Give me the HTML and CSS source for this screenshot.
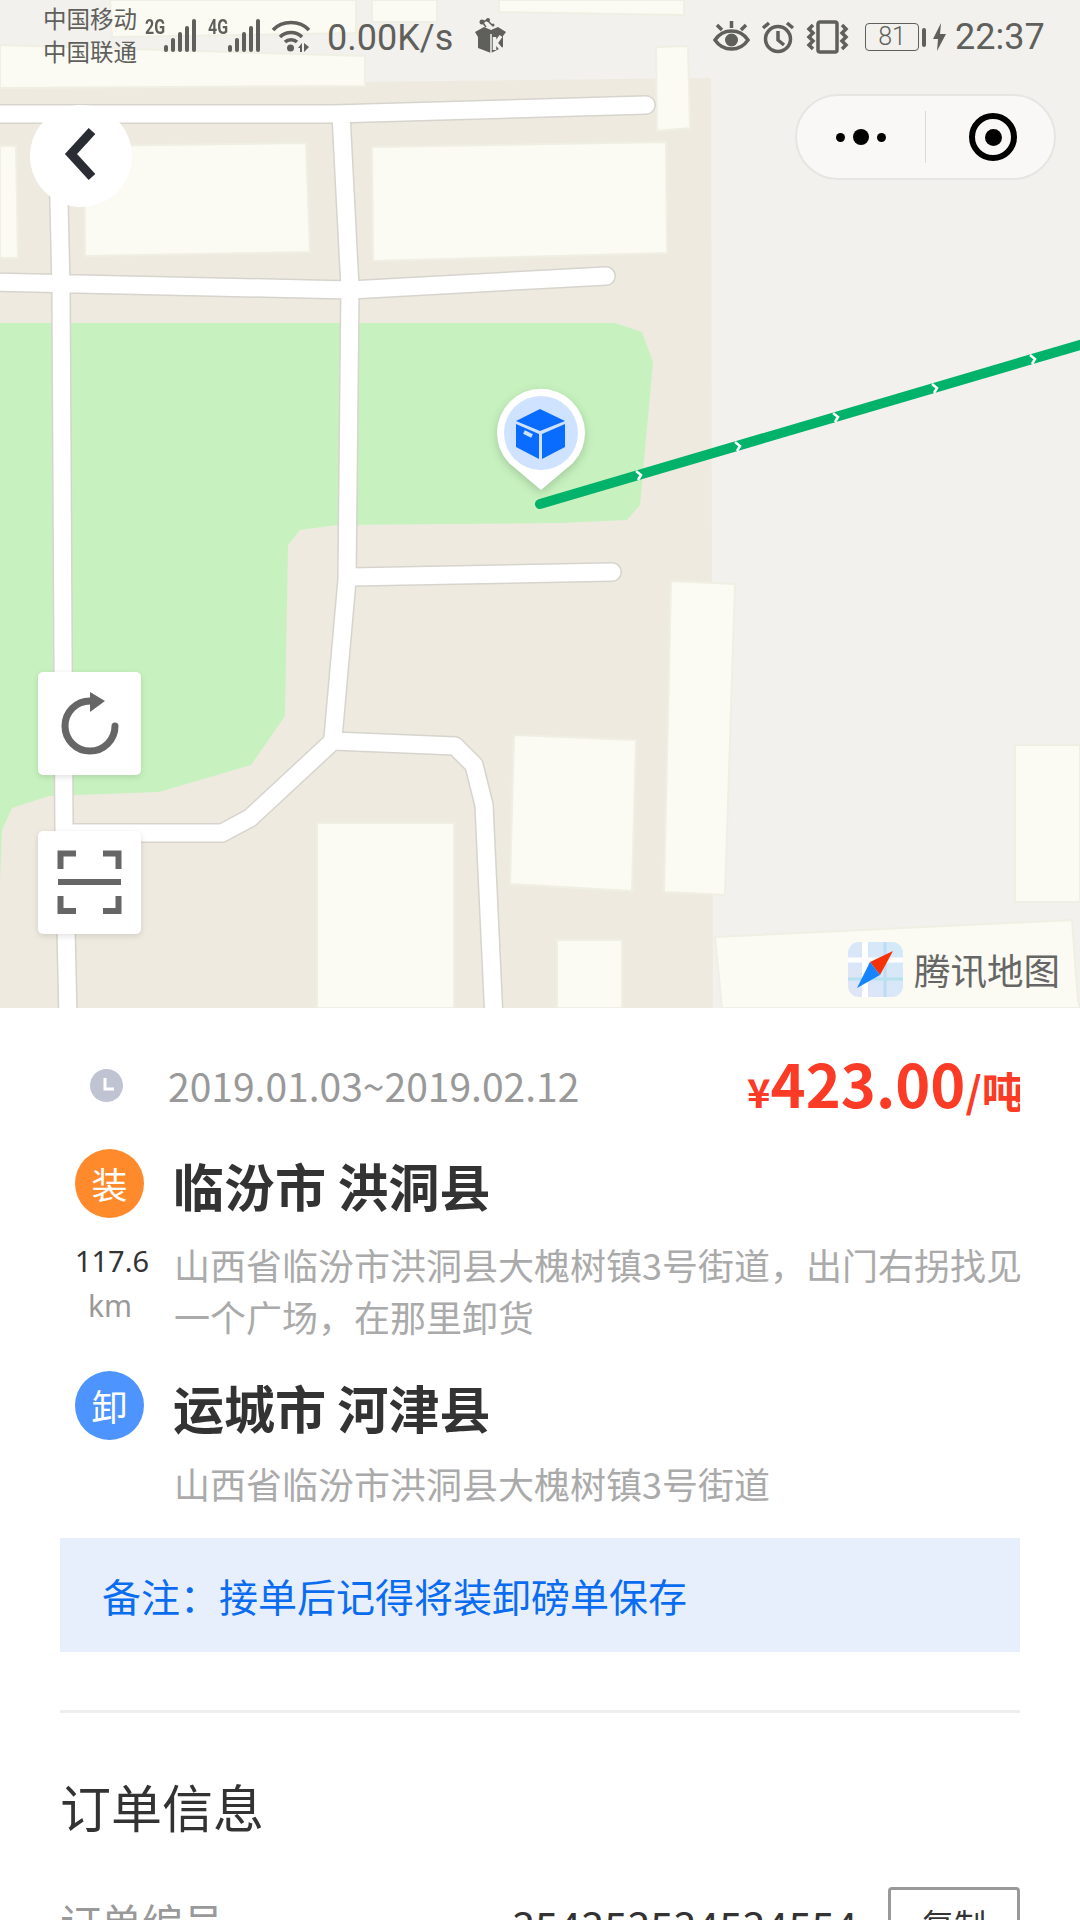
FILE: index.html
```html
<!DOCTYPE html>
<html lang="zh">
  <head>
    <meta charset="UTF-8" />
    <title>订单详情</title>
    <link rel="stylesheet" href="styles.css">
  </head>
  <body>
    <div class="map">
      <svg class="mapCanvas" viewBox="0 0 1080 1008" width="1080" height="1008">
        <defs>
          <path id="roads" d="M-10 114 L333 114 L646 105 M341 114 L350 288 L347 580 L333 738 M57 114 L61 288 L64 833 L68 1020 M-10 282 L350 290 L606 276 M350 577 L612 572 M64 833 L222 833 L250 818 L333 741 L455 746 L474 765 L484 805 L494 1020" />
        </defs>
        <rect class="ground" width="1080" height="1008" />
        <path class="block" d="M0 86 L711 78 L713 1008 L0 1008 Z" />
        <path class="park" d="M0 323 L615 323 L642 332 L653 362 L640 505 L627 520 L560 523 L337 525 L300 530 L288 545 L285 716 L251 765 L159 792 L49 796 L12 808 L2 830 L0 880 Z" />
        <g class="buildings">
          <path d="M0 45 L365 56 L365 86 L0 88 Z" />
          <path d="M110 0 L356 0 L356 33 L112 37 Z" />
          <path d="M372 0 L437 0 L437 22 L372 22 Z" />
          <path d="M499 0 L684 0 L684 15 L499 12 Z" />
          <path d="M656 47 L688 46 L690 128 L657 131 Z" />
          <path d="M0 146 L16 146 L18 258 L0 258 Z" />
          <path d="M84 146 L306 143 L310 252 L85 256 Z" />
          <path d="M372 147 L666 142 L667 253 L373 261 Z" />
          <path d="M671 581 L735 584 L725 895 L664 892 Z" />
          <path d="M514 735 L636 740 L632 891 L510 884 Z" />
          <path d="M317 823 L454 823 L454 1008 L317 1008 Z" />
          <path d="M557 940 L622 940 L622 1008 L557 1008 Z" />
          <path d="M1015 745 L1080 745 L1080 902 L1015 902 Z" />
          <path d="M715 937 L1072 920 L1078 1000 L1080 1008 L722 1008 Z" />
        </g>
        <use class="roadCasing" href="#roads" />
        <use class="roadFill" href="#roads" />
        <path class="route" d="M540 504 L1090 342" />
        <g class="routeArrows">
          <path d="M636 471 L641 475 L638 480" />
          <path d="M735 442 L740 446 L737 451" />
          <path d="M833 413 L838 417 L835 422" />
          <path d="M932 384 L937 388 L934 393" />
          <path d="M1030 355 L1035 359 L1032 364" />
        </g>
        <path class="pin" d="M541 490 L509 463 A44 44 0 1 1 573 463 Z" />
        <circle class="pinInner" cx="541" cy="433" r="37" />
        <g class="pinBox">
          <path d="M540 409 L565 421 L540 431 L516 421 Z" />
          <path d="M516 424 L539 434 L539 459 L516 447 Z" />
          <path d="M542 434 L565 424 L565 447 L542 459 Z" />
        </g>
        <path class="pinSlot" d="M524 432 L532 436" />
      </svg>

      <div class="statusBar">
        <div class="carriers">
          <div>中国移动</div>
          <div>中国联通</div>
        </div>
        <span class="netType netFirst">2G</span>
        <svg class="bars" width="36" height="36" viewBox="0 0 36 36">
          <rect x="1" y="27" width="4" height="7" rx="2" />
          <rect x="8" y="20" width="4" height="14" rx="2" />
          <rect x="15" y="14" width="4" height="20" rx="2" />
          <rect x="22" y="8" width="4" height="26" rx="2" />
          <rect x="29" y="1" width="4" height="33" rx="2" />
        </svg>
        <span class="netType netSecond">4G</span>
        <svg class="bars" width="36" height="36" viewBox="0 0 36 36">
          <rect x="1" y="27" width="4" height="7" rx="2" />
          <rect x="8" y="20" width="4" height="14" rx="2" />
          <rect x="15" y="14" width="4" height="20" rx="2" />
          <rect x="22" y="8" width="4" height="26" rx="2" />
          <rect x="29" y="1" width="4" height="33" rx="2" />
        </svg>
        <svg class="wifi" width="40" height="34" viewBox="0 0 40 34">
          <path d="M2 11 C11 1 29 1 38 11 M9 18 C15 12 25 12 31 18" />
          <path d="M14 23 C17 20 23 20 26 23" />
          <circle class="fill" cx="19.5" cy="29" r="3.5" />
          <path class="fill" d="M27 29 L31 24 L31 33 L29 33 L29 29 Z M33 24 L33 33 L38 28 Z" />
        </svg>
        <span class="speed">0.00K/s</span>
        <svg class="gift" width="34" height="38" viewBox="0 0 34 38">
          <path d="M1 15 L10 10 L17 13 L24 10 L32 15 L29 19 L29 30 L17 36 L4 31 L4 20 Z" />
          <path class="giftMark" d="M17 17 L17 36" />
          <path class="giftKey" d="M20.5 20 L20.5 33 M27 19 L22 26 L27 32" />
          <path class="giftLine" d="M9 6 L12 10 M13 3 L9 5 M14 4 L18 8" />
          <circle cx="8" cy="5" r="2.5" /><circle cx="14" cy="3" r="2" /><circle cx="19" cy="8" r="1.5" />
        </svg>
        <div class="statusRight">
          <svg width="37" height="32" viewBox="0 0 37 32">
            <path d="M2 20 C10 8 27 8 35 20 C27 32 10 32 2 20 Z" />
            <circle class="fill" cx="18.5" cy="20" r="6.5" />
            <path d="M18.5 8 L18.5 1 M9 10 L4 5 M28 10 L33 5" />
          </svg>
          <svg width="34" height="34" viewBox="0 0 34 34">
            <circle cx="17" cy="19" r="12.5" />
            <path d="M17 11 L17 20 L23 25 M2 8 L8 3 M32 8 L26 3" />
          </svg>
          <svg width="43" height="34" viewBox="0 0 43 34">
            <rect x="12" y="2" width="19" height="30" rx="2" />
            <path d="M7 5 L3 9 L7 13 L3 17 L7 21 L3 25 L7 29 M36 5 L40 9 L36 13 L40 17 L36 21 L40 25 L36 29" />
          </svg>
          <div class="battery">81</div>
          <div class="batteryNub"></div>
          <svg class="bolt" width="13" height="28" viewBox="0 0 13 28">
            <path d="M8 0 L0 16 L5 16 L4 28 L13 11 L7 11 Z" />
          </svg>
          <span class="clock">22:37</span>
        </div>
      </div>

      <div class="backBtn">
        <svg width="102" height="102" viewBox="0 0 102 102">
          <path d="M62 26 L41 49 L62 72" />
        </svg>
      </div>

      <div class="capsule">
        <div class="capsuleDots">
          <i class="dot"></i><i class="dot dotBig"></i><i class="dot"></i>
        </div>
        <div class="capsuleLine"></div>
        <div class="capsuleTarget"><i></i></div>
      </div>

      <div class="mapBtn refreshBtn">
        <svg width="103" height="102" viewBox="0 0 103 102">
          <path d="M77 54 A25 25 0 1 1 52 29" />
          <path class="fill" d="M52 20 L67 29 L52 40 Z" />
        </svg>
      </div>
      <div class="mapBtn scanBtn">
        <svg width="103" height="103" viewBox="0 0 103 103">
          <path d="M38 22.5 L22.5 22.5 L22.5 38 M65 22.5 L80.5 22.5 L80.5 38 M22.5 65 L22.5 80 L38 80 M80.5 65 L80.5 80 L65 80 M20 51 L83 51" />
        </svg>
      </div>

      <div class="mapLogo">
        <svg width="55" height="55" viewBox="0 0 55 55">
          <defs>
            <linearGradient id="logoBg" x1="0" y1="1" x2="1" y2="0">
              <stop offset="0" stop-color="#dfe4f7" />
              <stop offset="1" stop-color="#d2eaf8" />
            </linearGradient>
          </defs>
          <rect width="55" height="55" rx="11" fill="url(#logoBg)" />
          <path d="M17 0 L17 55" stroke="#fff" stroke-width="6" />
          <path d="M37 0 L37 55" stroke="#bcdcf3" stroke-width="3" />
          <path d="M0 18 L55 18" stroke="#fff" stroke-width="5" />
          <path d="M0 37 L55 37" stroke="#b5e2ee" stroke-width="3" />
          <path d="M45 9 L22 20 L32 33 Z" fill="#f5310a" />
          <path d="M22 20 L9 46 L32 33 Z" fill="#1684ff" />
        </svg>
        <span>腾讯地图</span>
      </div>
    </div>

    <div class="panel">
      <div class="dateRow">
        <div class="dateLeft">
          <svg class="dateIcon" width="33" height="33" viewBox="0 0 33 33">
            <circle cx="16.5" cy="16.5" r="16.5" />
            <path d="M15 9 L15 20 L24 20" />
          </svg>
          <span class="dateText">2019.01.03~2019.02.12</span>
        </div>
        <div class="price"><span class="priceSign">¥</span><span class="priceNum">423.00</span><span class="priceUnit">/吨</span></div>
      </div>

      <div class="stop">
        <div class="badge badgeLoad">装</div>
        <div class="city">临汾市 洪洞县</div>
        <div class="distance">
          <div class="distanceNum">117.6</div>
          <div class="distanceUnit">km</div>
        </div>
        <div class="address">山西省临汾市洪洞县大槐树镇3号街道，出门右拐找见一个广场，在那里卸货</div>
      </div>

      <div class="stop stopLast">
        <div class="badge badgeUnload">卸</div>
        <div class="city">运城市 河津县</div>
        <div></div>
        <div class="address">山西省临汾市洪洞县大槐树镇3号街道</div>
      </div>

      <div class="remark">备注：接单后记得将装卸磅单保存</div>
      <div class="divider"></div>

      <div class="sectionTitle">订单信息</div>
      <div class="infoRow">
        <span class="infoLabel">订单编号</span>
        <span class="infoValue">354353534534554</span>
        <span class="copyBtn">复制</span>
      </div>
    </div>
  </body>
</html>
```

FILE: styles.css
```css
html, body {
  margin: 0;
  padding: 0;
  width: 1080px;
  height: 1920px;
  overflow: hidden;
  background-color: #fff;
  font-family: "Noto Sans CJK SC", "Noto Sans", sans-serif;
}

/* map */
.map {
  position: relative;
  width: 1080px;
  height: 1008px;
  overflow: hidden;
}
.mapCanvas {
  display: block;
}
.ground {
  fill: #f2f1ed;
}
.block {
  fill: #eeeae0;
}
.park {
  fill: #c7f2bf;
}
.buildings path {
  fill: #fbfbf3;
  stroke: #f0efe3;
  stroke-width: 2;
}
.roadCasing, .roadFill {
  fill: none;
  stroke-linecap: round;
  stroke-linejoin: round;
}
.roadCasing {
  stroke: #d6d4cd;
  stroke-width: 20;
}
.roadFill {
  stroke: #fff;
  stroke-width: 17;
}
.route {
  fill: none;
  stroke: #00b26a;
  stroke-width: 10;
  stroke-linecap: round;
}
.routeArrows path {
  fill: none;
  stroke: #fff;
  stroke-width: 2.5;
}
.pin {
  fill: #fff;
  filter: drop-shadow(0 3px 5px rgba(0, 0, 0, 0.18));
}
.pinInner {
  fill: #cfe2ff;
}
.pinBox path {
  fill: #0a6cff;
}
.pinSlot {
  stroke: #cfe2ff;
  stroke-width: 4;
}

/* status bar */
.statusBar {
  position: absolute;
  top: 0;
  left: 0;
  right: 0;
  height: 72px;
  display: flex;
  align-items: flex-start;
  padding-left: 43px;
  box-sizing: border-box;
  color: #5f5f5c;
}
.carriers {
  font-size: 23.5px;
  line-height: 33px;
  padding-top: 2px;
  width: 102px;
}
.netType {
  font-family: "Roboto", sans-serif;
  font-weight: 700;
  font-size: 20px;
  line-height: 20px;
  padding-top: 17px;
  transform: scaleX(0.8);
  transform-origin: left;
}
.netFirst {
  width: 18px;
}
.netSecond {
  width: 19px;
  margin-left: 9px;
}
.bars {
  margin-top: 18px;
  fill: #5f5f5c;
}
.wifi {
  margin: 19px 0 0 8px;
}
.wifi path, .statusRight svg path, .statusRight svg circle, .statusRight svg rect {
  fill: none;
  stroke: #5f5f5c;
  stroke-width: 3.5;
}
.wifi .fill, .statusRight svg .fill {
  fill: #5f5f5c;
  stroke: none;
}
.speed {
  font-family: "Roboto", sans-serif;
  font-size: 36px;
  line-height: 40px;
  padding-top: 18px;
  margin-left: 16px;
}
.gift {
  margin: 17px 0 0 21px;
  fill: #5f5f5c;
}
.giftMark {
  fill: none;
  stroke: #f2f1ed;
  stroke-width: 1.5;
}
.giftKey {
  fill: none;
  stroke: #f2f1ed;
  stroke-width: 3.5;
}
.giftLine {
  fill: none;
  stroke: #5f5f5c;
  stroke-width: 1.5;
}
.statusRight {
  position: absolute;
  top: 0;
  left: 713px;
  display: flex;
  align-items: flex-start;
}
.statusRight svg {
  margin-top: 20px;
  margin-right: 11px;
}
.statusRight svg:nth-child(3) {
  margin-right: 16px;
}
.battery {
  width: 52px;
  height: 26px;
  margin-top: 23px;
  border: 1.5px solid #5f5f5c;
  border-radius: 4px;
  font-family: "Roboto", sans-serif;
  font-weight: 300;
  font-size: 25px;
  line-height: 26px;
  text-align: center;
}
.batteryNub {
  width: 4px;
  height: 19px;
  margin: 28px 7px 0 3px;
  background-color: #5f5f5c;
  border-radius: 2px;
}
.statusRight svg.bolt {
  margin-top: 23px;
  margin-right: 9px;
}
.statusRight svg.bolt path {
  fill: #5f5f5c;
  stroke: none;
}
.clock {
  font-family: "Roboto", sans-serif;
  font-size: 36px;
  line-height: 40px;
  padding-top: 17px;
}

/* controls over the map */
.backBtn {
  position: absolute;
  left: 30px;
  top: 105px;
  width: 102px;
  height: 102px;
  border-radius: 50%;
  background-color: #fff;
}
.backBtn svg {
  display: block;
}
.backBtn path {
  fill: none;
  stroke: #2a2d34;
  stroke-width: 9;
}
.capsule {
  position: absolute;
  left: 795px;
  top: 94px;
  width: 261px;
  height: 86px;
  box-sizing: border-box;
  border: 2px solid #e6e5e2;
  border-radius: 43px;
  background-color: #f9f8f6;
  display: flex;
  align-items: center;
}
.capsuleDots {
  width: 128px;
  display: flex;
  align-items: center;
  justify-content: center;
  gap: 8px;
}
.dot {
  width: 9px;
  height: 9px;
  border-radius: 50%;
  background-color: #000;
}
.dotBig {
  width: 16px;
  height: 16px;
}
.capsuleLine {
  width: 1px;
  height: 52px;
  background-color: #dcdbd8;
}
.capsuleTarget {
  width: 48px;
  height: 48px;
  margin-left: 43px;
  box-sizing: border-box;
  border: 6px solid #000;
  border-radius: 50%;
  display: flex;
  align-items: center;
  justify-content: center;
}
.capsuleTarget i {
  width: 17px;
  height: 17px;
  border-radius: 50%;
  background-color: #000;
}
.mapBtn {
  position: absolute;
  left: 38px;
  width: 103px;
  height: 103px;
  background-color: #fff;
  border-radius: 5px;
  box-shadow: 0 2px 6px rgba(0, 0, 0, 0.12);
}
.refreshBtn {
  top: 672px;
}
.scanBtn {
  top: 831px;
}
.mapBtn svg {
  display: block;
}
.mapBtn path {
  fill: none;
  stroke: #666;
  stroke-width: 6;
  stroke-linecap: butt;
}
.refreshBtn path {
  stroke-width: 7;
  stroke-linecap: round;
}
.mapBtn .fill {
  fill: #666;
  stroke: none;
}
.mapLogo {
  position: absolute;
  left: 848px;
  top: 942px;
  display: flex;
  align-items: center;
  gap: 11px;
  font-size: 36.5px;
  line-height: 55px;
  color: #666;
}
.mapLogo svg {
  display: block;
}

/* order panel */
.panel {
  padding: 37px 60px 0;
}
.dateRow {
  height: 80px;
  display: flex;
  align-items: center;
  justify-content: space-between;
  margin-bottom: 25px;
}
.dateLeft {
  display: flex;
  align-items: center;
}
.dateIcon {
  margin-left: 30px;
  margin-right: 45px;
}
.dateIcon circle {
  fill: #c0c4d2;
}
.dateIcon path {
  fill: none;
  stroke: #fff;
  stroke-width: 3;
}
.dateText {
  font-size: 39px;
  color: #999;
}
.price {
  width: 273px;
  margin-top: 12px;
  overflow: hidden;
  white-space: nowrap;
  color: #fb3b26;
  font-weight: 700;
  line-height: 80px;
}
.priceSign {
  font-size: 40px;
}
.priceNum {
  font-size: 59.5px;
}
.priceUnit {
  font-size: 42px;
}
.stop {
  display: grid;
  grid-template-columns: 113px 1fr;
  grid-template-rows: 70px auto;
  row-gap: 18px;
  align-items: center;
  margin-bottom: 30px;
}
.stopLast {
  row-gap: 15px;
  margin-bottom: 29px;
}
.badge {
  width: 69px;
  height: 69px;
  margin-left: 15px;
  margin-top: -3px;
  border-radius: 50%;
  color: #fff;
  font-size: 36px;
  line-height: 69px;
  text-align: center;
}
.badgeLoad {
  background-color: #ff8a2c;
}
.badgeUnload {
  background-color: #4e94ff;
}
.city {
  font-size: 51px;
  font-weight: 700;
  line-height: 70px;
  color: #333;
}
.distance {
  align-self: start;
  width: 100px;
  text-align: center;
  font-family: "Noto Sans", sans-serif;
  font-size: 30px;
  line-height: 45px;
}
.distanceNum {
  color: #333;
  font-size: 29px;
  padding-left: 4px;
}
.distanceUnit {
  color: #999;
}
.address {
  padding-left: 1px;
  margin-right: -5px;
  font-size: 36px;
  line-height: 52px;
  color: #aaa;
}
.remark {
  height: 114px;
  padding-left: 42px;
  background-color: #e6effb;
  color: #0a6cf0;
  font-size: 39px;
  line-height: 114px;
}
.divider {
  height: 3px;
  margin-top: 58px;
  background-color: #eee;
}
.sectionTitle {
  margin-top: 58px;
  font-size: 51px;
  line-height: 70px;
  color: #333;
}
.infoRow {
  display: flex;
  align-items: center;
  margin-top: 46px;
  height: 76px;
}
.infoLabel {
  font-size: 41px;
  color: #999;
  width: 452px;
  margin-top: -8px;
}
.infoValue {
  font-size: 41.5px;
  color: #333;
  width: 376px;
}
.copyBtn {
  box-sizing: border-box;
  width: 132px;
  height: 76px;
  border: 3px solid #999;
  border-radius: 4px;
  color: #333;
  font-size: 32px;
  line-height: 66px;
  text-align: center;
}
```
